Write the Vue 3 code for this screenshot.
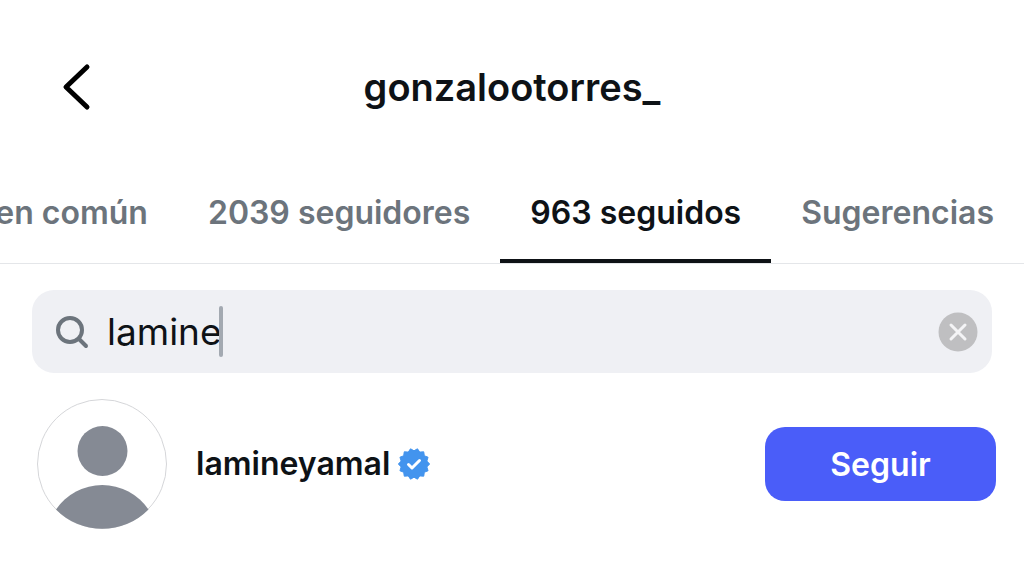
<script setup>
import { ref } from 'vue'

const username = 'gonzalootorres_'
const tabs = ['en común', '2039 seguidores', '963 seguidos', 'Sugerencias']
const active = ref(2)
const query = ref('lamine')
const people = [{ name: 'lamineyamal', verified: true }]

// Outline of the verified seal: alternating outer and inner points on two circles.
const sealPoints = Array.from({ length: 28 }, (_, i) => {
  const angle = ((i + 1) * Math.PI) / 14
  const radius = i % 2 ? 13.2 : 15.6
  return `${(16 + radius * Math.sin(angle)).toFixed(2)},${(16 - radius * Math.cos(angle)).toFixed(2)}`
}).join(' ')
</script>

<template>
  <main class="screen">
    <header class="top">
      <button class="back" type="button" aria-label="Atrás">
        <svg width="30" height="50" viewBox="0 0 30 50" aria-hidden="true">
          <path d="M25 5 L4 25 L25 45" />
        </svg>
      </button>
      <h1>{{ username }}</h1>
    </header>

    <nav class="tabs">
      <button
        v-for="(tab, i) in tabs"
        :key="tab"
        type="button"
        class="tab"
        :class="{ active: i === active }"
        @click="active = i"
      >{{ tab }}</button>
    </nav>

    <section class="content">
      <div class="search">
        <svg class="lens" width="34" height="34" viewBox="0 0 34 34" aria-hidden="true">
          <circle cx="15" cy="15" r="12" />
          <path d="M24 24 L31 31" />
        </svg>
        <div class="entry">
          <input v-model="query" type="text" size="6" aria-label="Buscar" />
          <span class="caret"></span>
        </div>
        <button class="clear" type="button" aria-label="Borrar" @click="query = ''">
          <svg width="40" height="40" viewBox="0 0 40 40" aria-hidden="true">
            <circle cx="20" cy="20" r="19.5" />
            <path d="M13 13 L27 27 M27 13 L13 27" />
          </svg>
        </button>
      </div>

      <ul class="people">
        <li v-for="person in people" :key="person.name" class="person">
          <svg class="avatar" width="130" height="130" viewBox="0 0 130 130" aria-hidden="true">
            <circle class="ring" cx="65" cy="65" r="64.5" />
            <circle class="fill" cx="65.5" cy="52" r="25" />
            <path class="fill" d="M19 110.500 A56 56 0 0 1 111.500 110.500 A65 65 0 0 1 19 110.500 Z" />
          </svg>
          <span class="name">{{ person.name }}</span>
          <svg v-if="person.verified" class="seal" width="32" height="32" viewBox="0 0 32 32" role="img" aria-label="Verificado">
            <polygon :points="sealPoints" />
            <path d="M10.500 16.500 L14 20 L21.500 12.500" />
          </svg>
          <button class="follow" type="button">Seguir</button>
        </li>
      </ul>
    </section>
  </main>
</template>

<style>
body {
  background: #fff;
}
</style>

<style scoped>
.screen {
  font-family: Inter, "Liberation Sans", sans-serif;
  color: #0e1216;
  overflow: hidden;
}
button {
  font: inherit;
  color: inherit;
  border: 0;
  padding: 0;
  background: none;
  cursor: pointer;
}
svg {
  display: block;
  flex: none;
}
path,
.lens circle {
  fill: none;
  stroke-linecap: round;
  stroke-linejoin: round;
}
.top {
  display: grid;
  grid-template-columns: 1fr auto 1fr;
  align-items: center;
  height: 174px;
  padding: 0 62px;
}
.back {
  justify-self: start;
}
.back path {
  stroke: #000;
  stroke-width: 5;
}
h1 {
  margin: 0;
  font-size: 38px;
  font-weight: 600;
  line-height: 48px;
}
.tabs {
  display: flex;
  justify-content: flex-end;
  border-bottom: 1px solid #e4e6e9;
}
.tab {
  flex: none;
  padding: 18px 30px 26px;
  border-bottom: 4px solid transparent;
  font-size: 32px;
  font-weight: 600;
  line-height: 41px;
  color: #6c747c;
  white-space: nowrap;
}
.tab.active {
  color: #0e1216;
  border-color: #0e1216;
}
.content {
  padding: 26px 28px 0 32px;
}
.search {
  display: flex;
  align-items: center;
  height: 83px;
  margin-right: 4px;
  padding: 0 14px 0 23px;
  border-radius: 22px;
  background: #eff0f4;
}
.lens {
  stroke: #6c747c;
  stroke-width: 4;
}
.entry {
  display: flex;
  align-items: center;
  margin-left: 18px;
}
input {
  field-sizing: content;
  padding: 0;
  border: 0;
  outline: 0;
  background: none;
  font: inherit;
  font-size: 37px;
  line-height: 52px;
  color: inherit;
}
.caret {
  width: 4px;
  height: 51px;
  margin-left: -3px;
  border-radius: 2px;
  background: #a3a9b1;
}
.clear {
  margin-left: auto;
}
.clear circle {
  fill: #bfbfc1;
}
.clear path {
  stroke: #f4f4f6;
  stroke-width: 3;
}
.people {
  margin: 26px 0 0;
  padding: 0 0 0 5px;
  list-style: none;
}
.person {
  display: flex;
  align-items: center;
}
.ring {
  fill: #fff;
  stroke: #d5d6d9;
}
.avatar .fill {
  fill: #858a94;
}
.name {
  margin-left: 29px;
  font-size: 32px;
  font-weight: 600;
  line-height: 40px;
}
.seal {
  margin-left: 8px;
}
.seal polygon {
  fill: #4394ee;
  stroke: #4394ee;
  stroke-linejoin: round;
}
.seal path {
  stroke: #fff;
  stroke-width: 3;
}
.follow {
  margin-left: auto;
  width: 231px;
  height: 74px;
  border-radius: 20px;
  background: #4a5df9;
  color: #fff;
  font-size: 32px;
  font-weight: 600;
}
</style>
